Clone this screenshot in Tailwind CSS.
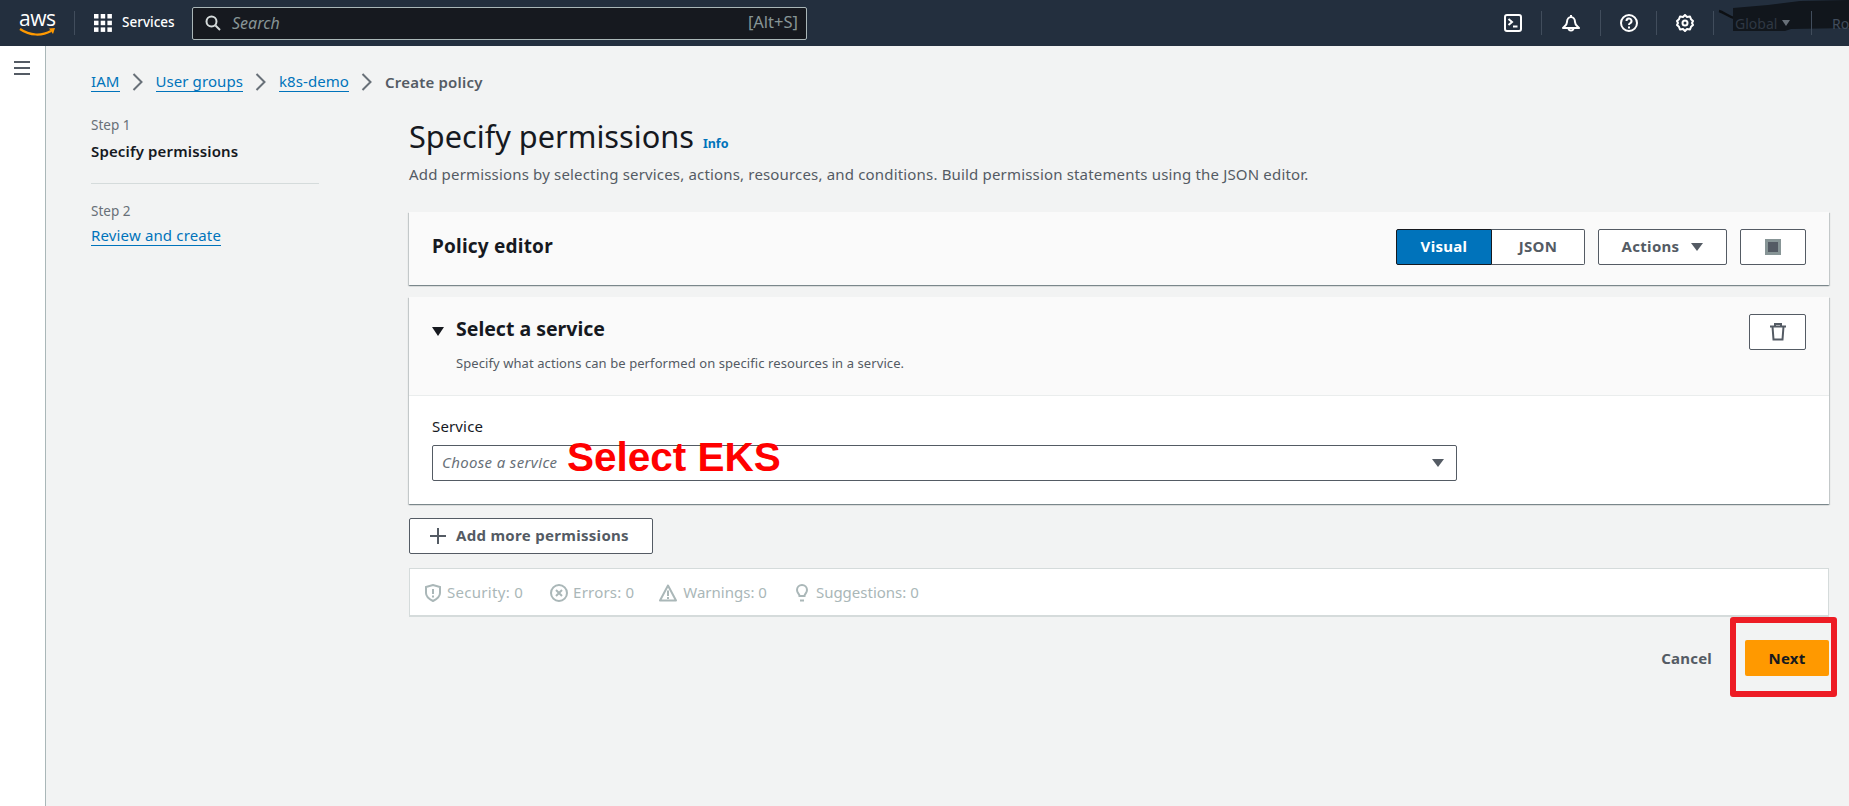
<!DOCTYPE html>
<html lang="en">
<head>
  <meta charset="UTF-8" />
  <title>Create policy</title>
  <script src="https://cdn.jsdelivr.net/npm/@tailwindcss/browser@4"></script>
</head>
<body class="relative h-screen overflow-hidden bg-[#f2f3f3] text-[#16191f] font-['Noto_Sans',sans-serif]">
  <!-- top nav -->
  <header class="relative h-[46px] bg-[#232f3e] flex items-center text-white">
    <div class="w-[74px] pl-[19px] flex flex-col items-start shrink-0">
      <span class="text-[21px] leading-[17px] font-['Open_Sans',sans-serif] tracking-tight">aws</span>
      <svg width="37" height="10" viewBox="0 0 37 10"><path d="M1 2c10 7 22 7 31 2" fill="none" stroke="#f90" stroke-width="2.2"/><path d="M30 1.500l6-.5-2 6z" fill="#f90"/></svg>
    </div>
    <div class="w-px h-[24px] bg-[#414d5c] mr-[19px]"></div>
    <svg width="18" height="18" viewBox="0 0 18 18" fill="#fff" class="shrink-0">
      <rect x="0" y="0" width="4.500" height="4.500"/><rect x="6.700" y="0" width="4.500" height="4.500"/><rect x="13.400" y="0" width="4.500" height="4.500"/>
      <rect x="0" y="6.700" width="4.500" height="4.500"/><rect x="6.700" y="6.700" width="4.500" height="4.500"/><rect x="13.400" y="6.700" width="4.500" height="4.500"/>
      <rect x="0" y="13.400" width="4.500" height="4.500"/><rect x="6.700" y="13.400" width="4.500" height="4.500"/><rect x="13.400" y="13.400" width="4.500" height="4.500"/>
    </svg>
    <span class="ml-[10px] w-[70px] -mt-[2px] text-[13.500px] font-medium shrink-0">Services</span>
    <div class="w-[615px] h-[33px] bg-[#16191f] border border-[#aab7b8] rounded-[2px] flex items-center pl-[12px] pr-[8px]">
      <svg width="16" height="16" viewBox="0 0 16 16" fill="none" stroke="#d5dbdb" stroke-width="2"><circle cx="6.500" cy="6.500" r="5"/><path d="M10.500 10.500l4.500 4.500"/></svg>
      <span class="ml-[11px] -mt-[1px] text-[16px] italic text-[#879596]">Search</span>
      <span class="ml-auto -mt-[1px] text-[16.500px] text-[#879596]">[Alt+S]</span>
    </div>

    <!-- pen scribble over account info -->
    <svg class="absolute left-[1715px] top-0" width="134" height="34" viewBox="0 0 134 34"><path d="M4 11c5 1 9 6 18 8" fill="none" stroke="#0d1014" stroke-width="2.500"/><path d="M18 8l35-3 32-4 49-1v28l-58 1-6 2H18z" fill="#11161c"/></svg>

    <div class="relative ml-auto flex items-center h-full">
      <svg width="18" height="18" viewBox="0 0 18 18" fill="none" stroke="#fff" stroke-width="2"><rect x="1" y="1" width="16" height="16" rx="2"/><path d="M4.500 5l3.500 3-3.500 3M9 12.500h4.500"/></svg>
      <div class="w-px h-[24px] bg-[#414d5c] ml-[19px] mr-[20px]"></div>
      <svg width="18" height="18" viewBox="0 0 18 18" fill="none" stroke="#fff" stroke-width="2"><path d="M9 1v2M5 8c0-3 2-5 4-5s4 2 4 5 2 4 4 6H1c2-2 4-3 4-6z" stroke-linejoin="round"/><path d="M6.500 14a2.500 2.500 0 0 0 5 0"/></svg>
      <div class="w-px h-[26px] bg-[#414d5c] ml-[20px] mr-[19px]"></div>
      <svg width="18" height="18" viewBox="0 0 18 18" fill="none" stroke="#fff" stroke-width="2"><circle cx="9" cy="9" r="8"/><path d="M6.500 7a2.500 2.500 0 1 1 3.500 2.300c-.7.3-1 .8-1 1.700"/><path d="M9 12.500v2"/></svg>
      <div class="w-px h-[24px] bg-[#414d5c] ml-[18px] mr-[19px]"></div>
      <svg width="18" height="18" viewBox="0 0 18 18" fill="none" stroke="#fff" stroke-width="2" stroke-linejoin="round"><path d="M9 1l2 2 3-.5 1 2.700 2 1.800-1 2 1 2-2 1.800-1 2.700-3-.5-2 2-2-2-3 .5-1-2.700-2-1.800 1-2-1-2 2-1.800 1-2.700 3 .5z"/><circle cx="9" cy="9" r="2.500"/></svg>
      <div class="w-px h-[24px] bg-[#414d5c] ml-[19px] mr-[21px]"></div>
      <span class="text-[14px] text-[#2f3844] w-[47px]">Global</span>
      <span class="w-0 h-0 border-x-[4px] border-x-transparent border-t-[6px] border-t-[#687078]"></span>
      <div class="w-px h-[24px] bg-[#414d5c] ml-[21px] mr-[20px]"></div>
      <span class="text-[14px] text-[#414d5c] w-[17px]">Ro</span>
    </div>
  </header>

  <div class="flex h-[760px]">
    <aside class="w-[46px] shrink-0 bg-white border-r border-[#aab7b8] pt-[15px] pr-[2px] flex justify-center">
      <svg width="16" height="14" viewBox="0 0 16 14" fill="#545b64"><rect width="16" height="2"/><rect y="6" width="16" height="2"/><rect y="12" width="16" height="2"/></svg>
    </aside>

    <main class="flex-1 pl-[45px] pr-[20px]">
      <nav class="h-[72px] flex items-center text-[15px] tracking-[0.08px]">
        <a class="text-[#0073bb] border-b border-[#0073bb] leading-[19px]">IAM</a>
        <svg class="mx-[12px]" width="12" height="18" viewBox="0 0 12 18" fill="none" stroke="#687078" stroke-width="2"><path d="M1.500 1l8 8-8 8"/></svg>
        <a class="text-[#0073bb] border-b border-[#0073bb] leading-[19px]">User groups</a>
        <svg class="mx-[12px]" width="12" height="18" viewBox="0 0 12 18" fill="none" stroke="#687078" stroke-width="2"><path d="M1.500 1l8 8-8 8"/></svg>
        <a class="text-[#0073bb] border-b border-[#0073bb] leading-[19px]">k8s-demo</a>
        <svg class="mx-[12px]" width="12" height="18" viewBox="0 0 12 18" fill="none" stroke="#687078" stroke-width="2"><path d="M1.500 1l8 8-8 8"/></svg>
        <span class="text-[#545b64] font-semibold tracking-[0.2px]">Create policy</span>
      </nav>

      <div class="flex">
        <ol class="w-[318px] shrink-0">
          <li class="w-[228px] h-[69px] border-b border-[#d5dbdb] -mt-[3px]">
            <div class="text-[13.500px] text-[#687078] leading-[20px]">Step 1</div>
            <div class="mt-[6px] text-[15px] font-semibold leading-[20px] tracking-[0.15px]">Specify permissions</div>
          </li>
          <li class="pt-[17px]">
            <div class="text-[13.500px] text-[#687078] leading-[20px]">Step 2</div>
            <a class="inline-block mt-[5px] text-[15px] text-[#0073bb] border-b border-[#0073bb] leading-[19px] tracking-[0.15px]">Review and create</a>
          </li>
        </ol>

        <div class="flex-1 min-w-0">
          <div class="flex items-baseline -mt-[2px]">
            <h1 class="text-[30.700px] leading-[40px] font-normal">Specify permissions</h1>
            <a class="ml-[9px] text-[12.500px] font-bold text-[#0073bb]">Info</a>
          </div>
          <p class="mt-[8px] text-[15px] leading-[20px] text-[#545b64] tracking-[0.17px]">Add permissions by selecting services, actions, resources, and conditions. Build permission statements using the JSON editor.</p>

          <section class="mt-[28px] h-[73px] bg-[#fafafa] shadow-[0_1px_1px_0_rgba(0,28,36,0.3),1px_1px_1px_0_rgba(0,28,36,0.15),-1px_1px_1px_0_rgba(0,28,36,0.15)] flex items-center pl-[23px] pr-[23px] pb-[4px]">
            <h2 class="text-[19px] font-bold tracking-[0.2px]">Policy editor</h2>
            <div class="ml-auto flex items-center gap-[13px] text-[15px] font-bold text-[#545b64] tracking-[0.3px]">
              <div class="flex h-[36px] rounded-[2px]">
                <span class="w-[96px] flex items-center justify-center bg-[#0073bb] text-white border border-[#16191f] rounded-l-[2px]">Visual</span>
                <span class="w-[93px] flex items-center justify-center bg-white border border-l-0 border-[#545b64] rounded-r-[2px]">JSON</span>
              </div>
              <button class="w-[129px] h-[36px] bg-white border border-[#545b64] rounded-[2px] flex items-center justify-center gap-[12px]">Actions
                <span class="w-0 h-0 border-x-[6px] border-x-transparent border-t-[8px] border-t-[#545b64]"></span>
              </button>
              <button class="w-[66px] h-[36px] bg-white border border-[#545b64] rounded-[2px] flex items-center justify-center">
                <svg width="16" height="16" viewBox="0 0 16 16"><rect width="16" height="16" fill="#879596"/><rect x="3" y="3" width="10" height="10" fill="#545b64"/></svg>
              </button>
            </div>
          </section>

          <section class="mt-[12px] h-[207px] bg-white shadow-[0_1px_1px_0_rgba(0,28,36,0.3),1px_1px_1px_0_rgba(0,28,36,0.15),-1px_1px_1px_0_rgba(0,28,36,0.15)]">
            <div class="h-[99px] bg-[#fafafa] border-b border-[#eaeded] pl-[23px] pr-[23px] pt-[17px] flex">
              <span class="mt-[13px] w-0 h-0 border-x-[6px] border-x-transparent border-t-[9px] border-t-[#16191f]"></span>
              <div class="ml-[12px]">
                <h2 class="text-[19.500px] font-bold leading-[30px]">Select a service</h2>
                <p class="mt-[10px] text-[13px] leading-[18px] text-[#545b64] tracking-[0.08px]">Specify what actions can be performed on specific resources in a service.</p>
              </div>
              <button class="ml-auto w-[57px] h-[36px] bg-white border border-[#545b64] rounded-[2px] flex items-center justify-center">
                <svg width="16" height="18" viewBox="0 0 16 18" fill="none" stroke="#545b64" stroke-width="2"><path d="M0 3.500h16M5 3.500V1h6v2.500M2.500 3.500l1 13h9l1-13"/></svg>
              </button>
            </div>
            <div class="pl-[23px] pr-[372px] pt-[20px]">
              <label class="block text-[15px] leading-[20px] tracking-[0.15px]">Service</label>
              <div class="mt-[9px] h-[36px] border border-[#545b64] rounded-[2px] bg-white flex items-center pl-[9px] pr-[12px]">
                <span class="-mt-[1px] text-[15px] italic text-[#687078] tracking-[0.35px]">Choose a service</span>
                <span class="ml-auto w-0 h-0 border-x-[6px] border-x-transparent border-t-[8px] border-t-[#545b64]"></span>
              </div>
            </div>
          </section>

          <button class="mt-[14px] w-[244px] h-[36px] pb-[1px] bg-white border border-[#545b64] rounded-[2px] flex items-center pl-[20px] gap-[10px] text-[15px] font-bold text-[#545b64] tracking-[0.3px]">
            <svg width="16" height="16" viewBox="0 0 16 16" fill="none" stroke="#545b64" stroke-width="2"><path d="M8 0v16M0 8h16"/></svg>
            Add more permissions
          </button>

          <div class="mt-[14px] h-[49px] pt-[1px] bg-white border border-[#d5dbdb] border-b-2 flex items-center pl-[15px] text-[15px] text-[#aab7b8] tracking-[0.2px]">
            <svg width="16" height="18" viewBox="0 0 16 18" fill="none" stroke="#aab7b8" stroke-width="2"><path d="M1 3l7-2 7 2v6c0 4-3 6-7 8-4-2-7-4-7-8z"/><path d="M8 5v5M8 11.500v2"/></svg>
            <span class="ml-[6px] tracking-[0.3px]">Security: 0</span>
            <svg class="ml-[27px]" width="18" height="18" viewBox="0 0 18 18" fill="none" stroke="#aab7b8" stroke-width="2"><circle cx="9" cy="9" r="8"/><path d="M6 6l6 6M12 6l-6 6"/></svg>
            <span class="ml-[5px]">Errors: 0</span>
            <svg class="ml-[25px]" width="18" height="18" viewBox="0 0 18 18" fill="none" stroke="#aab7b8" stroke-width="2"><path d="M9 1.500L1 16.500h16z" stroke-linejoin="round"/><path d="M9 6.500v5.500M9 13v2"/></svg>
            <span class="ml-[6px] tracking-[0px]">Warnings: 0</span>
            <svg class="ml-[29px]" width="12" height="18" viewBox="0 0 12 18" fill="none" stroke="#aab7b8" stroke-width="2"><path d="M3.500 12c0-2-2.500-3-2.500-6a5 5 0 0 1 10 0c0 3-2.500 4-2.500 6zM4 16.500h4"/></svg>
            <span class="ml-[8px] tracking-[0px]">Suggestions: 0</span>
          </div>

          <div class="mt-[23px] flex items-center justify-end text-[15px] font-bold tracking-[0.2px]">
            <a class="text-[#545b64]">Cancel</a>
            <button class="ml-[33px] w-[84px] h-[36px] bg-[#ff9900] rounded-[2px] text-[#16191f] font-bold">Next</button>
          </div>
        </div>
      </div>
    </main>
  </div>

  <!-- annotations drawn on the screenshot -->
  <span class="absolute left-[567px] top-[435px] text-[40.500px] leading-[44px] font-bold text-[#ff0000] font-['Liberation_Sans',sans-serif]">Select EKS</span>
  <div class="absolute left-[1730px] top-[617px] w-[107px] h-[80px] border-[6px] border-[#ed1c24] rounded-[3px]"></div>
</body>
</html>
